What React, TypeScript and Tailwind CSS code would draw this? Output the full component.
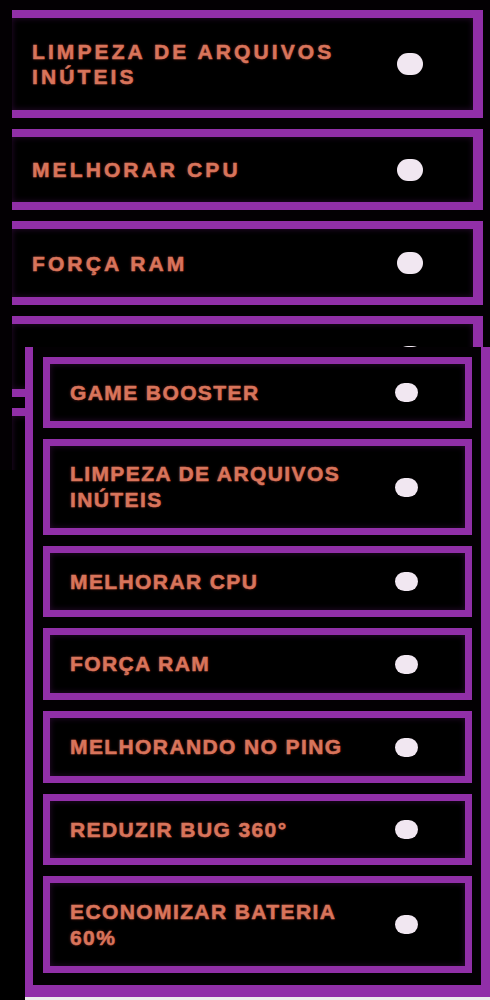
import React from "react";

const topItems: { label: string[]; h: string }[] = [
  { label: ["LIMPEZA DE ARQUIVOS", "INÚTEIS"], h: "h-[108px]" },
  { label: ["MELHORAR CPU"], h: "h-[81px]" },
  { label: ["FORÇA RAM"], h: "h-[84px]" },
  { label: ["MELHORANDO NO PING"], h: "h-[81px]" },
  { label: ["REDUZIR BUG 360°"], h: "h-[81px]" },
];

const bottomItems: { label: string[]; h: string }[] = [
  { label: ["GAME BOOSTER"], h: "h-[71px]" },
  { label: ["LIMPEZA DE ARQUIVOS", "INÚTEIS"], h: "h-[96px]" },
  { label: ["MELHORAR CPU"], h: "h-[71px]" },
  { label: ["FORÇA RAM"], h: "h-[72px]" },
  { label: ["MELHORANDO NO PING"], h: "h-[72px]" },
  { label: ["REDUZIR BUG 360°"], h: "h-[71px]" },
  { label: ["ECONOMIZAR BATERIA", "60%"], h: "h-[97px]" },
];

const font = { fontFamily: '"Liberation Sans", Arial, sans-serif' };

function TopCard({ label, h }: { label: string[]; h: string }) {
  return (
    <div
      className={`${h} shrink-0 ml-[12px] w-[471px] border-t-8 border-b-8 border-r-[10px] border-l-0 border-[#912fa8] bg-black shadow-[inset_0_0_6px_rgba(120,30,140,0.35)] flex items-center justify-between pl-[20px] pr-[50px]`}
    >
      <div
        className="text-[21px] leading-[25px] font-bold tracking-[3.1px] text-[#d8745b] [-webkit-text-stroke:0.5px_#d8745b] [text-shadow:0_0_3px_rgba(140,45,35,0.8)]"
        style={font}
      >
        {label.map((l) => (
          <div key={l}>{l}</div>
        ))}
      </div>
      <div className="w-[26px] h-[22px] rounded-full bg-[#f1e7f1] shrink-0" />
    </div>
  );
}

function BottomCard({ label, h }: { label: string[]; h: string }) {
  return (
    <div
      className={`${h} shrink-0 border-[7px] border-[#912fa8] bg-black shadow-[inset_0_0_6px_rgba(120,30,140,0.35)] flex items-center justify-between pl-[20px] pr-[47px]`}
    >
      <div
        className="text-[21px] leading-[26px] font-bold tracking-[1.4px] text-[#d8745b] [-webkit-text-stroke:0.5px_#d8745b] [text-shadow:0_0_3px_rgba(140,45,35,0.8)]"
        style={font}
      >
        {label.map((l) => (
          <div key={l}>{l}</div>
        ))}
      </div>
      <div className="w-[23px] h-[19px] rounded-full bg-[#f1e7f1] shrink-0" />
    </div>
  );
}

export default function App() {
  return (
    <div className="relative w-[490px] h-[1000px] overflow-hidden bg-black">
      <div className="h-[470px] overflow-hidden pt-[10px] flex flex-col gap-[11px] bg-[#030003]">
        {topItems.map((it, i) => (
          <TopCard key={i} label={it.label} h={it.h} />
        ))}
      </div>

      <div className="absolute left-[25px] top-[347px] w-[465px] h-[653px] flex flex-col">
        <div className="flex-1 border-l-8 border-r-[9px] border-b-[12px] border-t-0 border-[#912fa8] bg-[#030003] pt-[10px] pl-[10px] pr-[9px] flex flex-col gap-[11px]">
          {bottomItems.map((it, i) => (
            <BottomCard key={i} label={it.label} h={it.h} />
          ))}
        </div>
        <div className="h-[3px] bg-[#ececec]" />
      </div>
    </div>
  );
}
